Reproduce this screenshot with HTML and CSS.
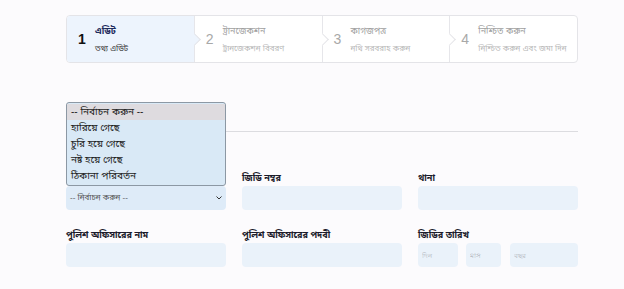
FILE: index.html
```html
<!DOCTYPE html>
<html lang="bn">
  <head>
    <meta charset="UTF-8" />
    <title>জিডি এডিট</title>
    <link rel="stylesheet" href="styles.css">
  </head>
  <body>
    <div class="page">
      <div class="steps">
        <div class="step active">
          <span class="num">1</span>
          <div class="text">
            <div class="title">এডিট</div>
            <div class="desc">তথ্য এডিট</div>
          </div>
        </div>
        <div class="step">
          <span class="num">2</span>
          <div class="text">
            <div class="title">ট্রানজেকশন</div>
            <div class="desc">ট্রানজেকশন বিবরণ</div>
          </div>
        </div>
        <div class="step">
          <span class="num">3</span>
          <div class="text">
            <div class="title">কাগজপত্র</div>
            <div class="desc">নথি সরবরাহ করুন</div>
          </div>
        </div>
        <div class="step last">
          <span class="num">4</span>
          <div class="text">
            <div class="title">নিশ্চিত করুন</div>
            <div class="desc">নিশ্চিত করুন এবং জমা দিন</div>
          </div>
        </div>
      </div>

      <form class="form">
        <div class="section"></div>

        <div class="grid">
          <div class="field pick">
            <div class="spacer"></div>
            <div class="select">
              <span>-- নির্বাচন করুন --</span>
              <svg width="6" height="4" viewBox="0 0 6 4"><path d="M0.5 0.5 L3 3 L5.5 0.5" fill="none" stroke="#333" stroke-width="1"/></svg>
            </div>
            <ul class="options">
              <li class="hover">-- নির্বাচন করুন --</li>
              <li>হারিয়ে গেছে</li>
              <li>চুরি হয়ে গেছে</li>
              <li>নষ্ট হয়ে গেছে</li>
              <li>ঠিকানা পরিবর্তন</li>
            </ul>
          </div>
          <div class="field">
            <label>জিডি নম্বর</label>
            <input type="text" />
          </div>
          <div class="field">
            <label>থানা</label>
            <input type="text" />
          </div>

          <div class="field">
            <label>পুলিশ অফিসারের নাম</label>
            <input type="text" />
          </div>
          <div class="field">
            <label>পুলিশ অফিসারের পদবী</label>
            <input type="text" />
          </div>
          <div class="field">
            <label>জিডির তারিখ</label>
            <div class="date">
              <input type="text" class="day" placeholder="দিন" />
              <input type="text" class="month" placeholder="মাস" />
              <input type="text" class="year" placeholder="বছর" />
            </div>
          </div>
        </div>
      </form>
    </div>
  </body>
</html>
```

FILE: styles.css
```css
body {
  background: #fcfbfd;
  color: #222;
  font-family: "Liberation Sans", "Noto Sans Bengali", "Noto Sans", sans-serif;
  margin: 0;
}

.page {
  margin-left: 66px;
  padding-top: 15px;
  width: 512px;
}

.steps {
  background: #fff;
  border: 1px solid #e4e4e8;
  border-radius: 4px;
  display: flex;
  height: 48px;
  box-sizing: border-box;
}

.step {
  align-items: center;
  border-right: 1px solid #e6e6ea;
  display: flex;
  flex: 1;
  gap: 8px;
  padding-left: 11px;
  position: relative;
}

.step::after {
  background: #fff;
  border-right: 1px solid #e4e4e8;
  border-top: 1px solid #e4e4e8;
  content: "";
  height: 8px;
  position: absolute;
  right: -5px;
  top: 19px;
  transform: rotate(45deg);
  width: 8px;
  z-index: 1;
}

.step.last::after {
  display: none;
}

.step.last {
  border-right: none;
}

.step.active {
  background: #edf4fd;
  border-radius: 3px 0 0 3px;
}

.step.active::after {
  background: #edf4fd;
}

.num {
  color: #a8a8a8;
  font-size: 14px;
  width: 9px;
}

.active .num {
  color: #111;
  font-weight: bold;
}

.title {
  color: #a0a0a0;
  font-size: 9px;
  line-height: 12px;
  margin-bottom: 6px;
}

.desc {
  color: #b8b8b8;
  font-size: 8px;
  line-height: 11px;
}

.active .title {
  color: #1d2b5c;
  font-weight: bold;
}

.active .desc {
  color: #333;
}

.form {
  margin-top: 46px;
}

.section {
  border-bottom: 1px solid #dcdce0;
  height: 22px;
}

.grid {
  display: grid;
  gap: 21px 16px;
  grid-template-columns: repeat(3, 160px);
  margin-top: 42px;
}

.field {
  display: flex;
  flex-direction: column;
  gap: 4px;
  position: relative;
}

.field label {
  color: #1a1a2a;
  font-size: 9px;
  font-weight: bold;
  line-height: 8px;
}

.spacer {
  height: 8px;
}

.field input,
.select {
  background: #eaf2fa;
  border: none;
  border-radius: 4px;
  box-sizing: border-box;
  height: 24px;
  margin: 0;
  padding: 0 4px;
  width: 100%;
}

.select {
  align-items: center;
  background: #deebf8;
  color: #555;
  display: flex;
  font-size: 8px;
  justify-content: space-between;
}

.options {
  background: #d9e9f6;
  border: 1px solid #8c98a4;
  border-radius: 3px;
  box-sizing: border-box;
  left: 0;
  list-style: none;
  margin: 0;
  padding: 1px 0;
  position: absolute;
  top: -72px;
  width: 160px;
  z-index: 2;
}

.options li {
  color: #222;
  font-size: 10px;
  height: 16px;
  line-height: 16px;
  padding-left: 4px;
}

.options li.hover {
  background: #dedbdf;
}

.date {
  display: flex;
}

.date input {
  color: #999;
  font-size: 7px;
}

.date input::placeholder {
  color: #b0b4ba;
}

.date .day {
  margin-right: 8px;
  width: 40px;
}

.date .month {
  margin-right: 9px;
  width: 35px;
}

.date .year {
  width: 68px;
}
```
